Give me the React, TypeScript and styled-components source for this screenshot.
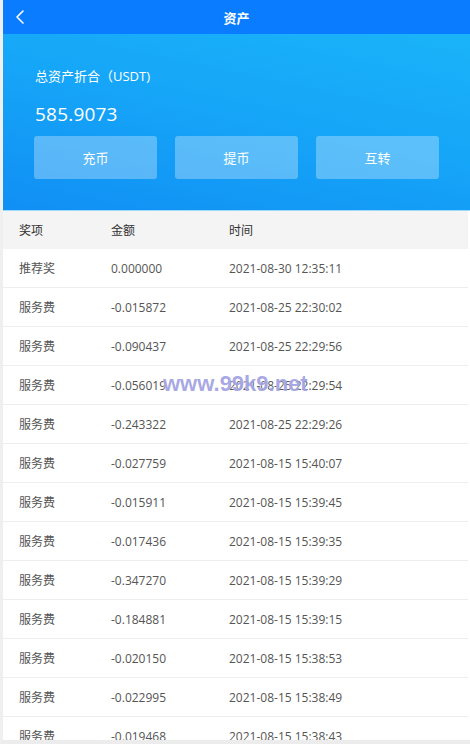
import React from 'react';
import styled, { createGlobalStyle } from 'styled-components';

const GlobalStyle = createGlobalStyle`
  html, body {
    margin: 0;
    padding: 0;
    background: #ececec;
  }
  * { box-sizing: border-box; }
`;

const Page = styled.div`
  position: relative;
  width: 470px;
  height: 744px;
  overflow: hidden;
  background: #fff;
  border-left: 3px solid #efefef;
  border-bottom: 4px solid #ececec;
  font-family: "Open Sans", "Noto Sans CJK SC", sans-serif;
`;

const TopBar = styled.header`
  height: 34px;
  background: #0a7cff;
  display: flex;
  align-items: center;
  justify-content: center;
  position: relative;
  color: #fff;
`;

const BackButton = styled.span`
  position: absolute;
  left: 11px;
  top: 9px;
  width: 14px;
  height: 16px;
  display: flex;
`;

const Title = styled.h1`
  margin: 0;
  font-size: 13px;
  font-weight: 700;
  font-family: "Noto Sans CJK SC", sans-serif;
`;

const Hero = styled.section`
  background: linear-gradient(12deg, #108ff4 0%, #16a6f8 55%, #1ab3f9 100%);
  padding: 30px 31px 31px;
  color: #fff;
  border-bottom: 1px solid #9fd9fa;
`;

const Label = styled.div`
  font-size: 13px;
  line-height: 24px;
  margin-left: 1px;
`;

const Amount = styled.div`
  font-size: 19px;
  line-height: 26px;
  margin-top: 13px;
  margin-left: 1px;
  letter-spacing: 0.2px;
`;

const Actions = styled.div`
  display: grid;
  grid-template-columns: repeat(3, 1fr);
  gap: 18px;
  margin-top: 9px;
`;

const ActionButton = styled.button`
  height: 43px;
  border: none;
  border-radius: 3px;
  background: rgba(255, 255, 255, 0.3);
  color: #fff;
  font-size: 13px;
  font-family: "Noto Sans CJK SC", sans-serif;
`;

const Row = styled.div<{ $head?: boolean }>`
  display: grid;
  grid-template-columns: 92px 118px 1fr;
  align-items: center;
  height: ${p => (p.$head ? '38px' : '39px')};
  padding-left: 16px;
  background: ${p => (p.$head ? '#f4f4f4' : '#fff')};
  border-bottom: 1px solid ${p => (p.$head ? '#f4f4f4' : '#eeeeee')};
  font-size: 12px;
  color: ${p => (p.$head ? '#333' : '#555')};
  margin-right: 2px;
`;

const Cell = styled.span`
  white-space: nowrap;
`;

const Watermark = styled.div`
  position: absolute;
  left: 160px;
  top: 371px;
  font-family: "Liberation Sans", Arial, sans-serif;
  font-weight: 700;
  font-size: 22px;
  color: rgba(110, 110, 210, 0.6);
  text-shadow: 0 0 1px rgba(255, 255, 255, 0.9);
  pointer-events: none;
`;

const records: [string, string, string][] = [
  ['推荐奖', '0.000000', '2021-08-30 12:35:11'],
  ['服务费', '-0.015872', '2021-08-25 22:30:02'],
  ['服务费', '-0.090437', '2021-08-25 22:29:56'],
  ['服务费', '-0.056019', '2021-08-25 22:29:54'],
  ['服务费', '-0.243322', '2021-08-25 22:29:26'],
  ['服务费', '-0.027759', '2021-08-15 15:40:07'],
  ['服务费', '-0.015911', '2021-08-15 15:39:45'],
  ['服务费', '-0.017436', '2021-08-15 15:39:35'],
  ['服务费', '-0.347270', '2021-08-15 15:39:29'],
  ['服务费', '-0.184881', '2021-08-15 15:39:15'],
  ['服务费', '-0.020150', '2021-08-15 15:38:53'],
  ['服务费', '-0.022995', '2021-08-15 15:38:49'],
  ['服务费', '-0.019468', '2021-08-15 15:38:43'],
];

const App: React.FC = () => {
  return (
    <>
      <GlobalStyle />
      <Page>
        <TopBar>
          <BackButton>
            <svg width="14" height="16" viewBox="0 0 14 16" fill="none">
              <path d="M9 2 L3 8 L9 14" stroke="#fff" strokeWidth="1.6" strokeLinecap="round" strokeLinejoin="round" />
            </svg>
          </BackButton>
          <Title>资产</Title>
        </TopBar>

        <Hero>
          <Label>总资产折合（USDT)</Label>
          <Amount>585.9073</Amount>
          <Actions>
            <ActionButton>充币</ActionButton>
            <ActionButton>提币</ActionButton>
            <ActionButton>互转</ActionButton>
          </Actions>
        </Hero>

        <Row $head>
          <Cell>奖项</Cell>
          <Cell>金额</Cell>
          <Cell>时间</Cell>
        </Row>
        {records.map((r, i) => (
          <Row key={i}>
            <Cell>{r[0]}</Cell>
            <Cell>{r[1]}</Cell>
            <Cell>{r[2]}</Cell>
          </Row>
        ))}

        <Watermark>www.99k9.net</Watermark>
      </Page>
    </>
  );
};

export default App;
